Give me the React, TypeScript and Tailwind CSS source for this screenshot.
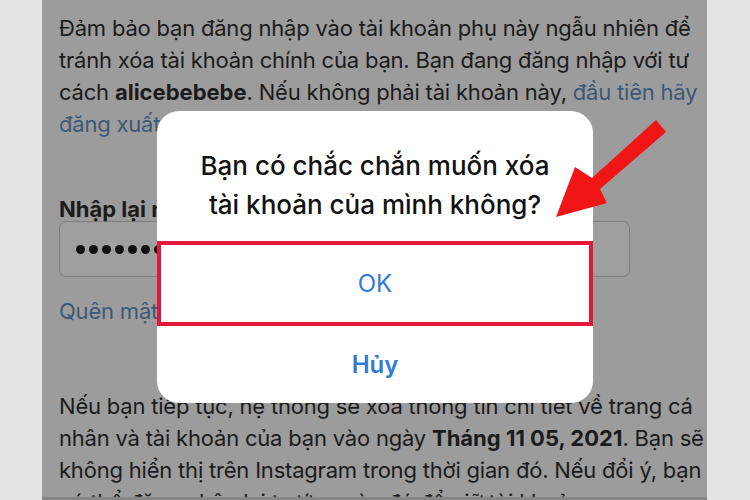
const font = { fontFamily: '"Inter", "Noto Sans", sans-serif' };

const Arrow = () => (
  <svg
    className="absolute left-[500px] top-[110px] w-[130px] h-[115px]"
    viewBox="542 110 130 115"
  >
    <polygon
      points="656,120 666,132 600,189 607,203 556,217 575,167 592,178"
      fill="#f11515"
    />
  </svg>
);

const ConfirmDialog = () => (
  <div className="absolute left-[115px] top-[111px] w-[436px] h-[292px] rounded-[22px] bg-white flex flex-col overflow-hidden">
    <div className="h-[130px] pt-[35px] text-center text-[26px] leading-[39px] font-medium text-[#111]">
      <div>Bạn có chắc chắn muốn xóa</div>
      <div>tài khoản của mình không?</div>
    </div>
    <div className="h-[85px] border-[4px] border-[#e3173a] flex items-center justify-center text-[24px] text-[#2f7bd5]">
      OK
    </div>
    <div className="flex-1 flex items-center justify-center text-[24px] font-semibold text-[#2f7bd5]">
      Hủy
    </div>
  </div>
);

export default function App() {
  return (
    <div className="w-[750px] h-[500px] flex bg-[#e4e4e4] overflow-hidden" style={font}>
      <div className="w-[42px] shrink-0" />
      <div className="relative w-[665px] shrink-0 bg-[#9c9c9c] overflow-hidden border-b-[3px] border-[#858585]">
        <div className="pl-[17px] pt-[12px] text-[22px] leading-[32px] tracking-[-0.2px] text-[#1b1b1b] whitespace-nowrap">
          <div>Đảm bảo bạn đăng nhập vào tài khoản phụ này ngẫu nhiên để</div>
          <div>tránh xóa tài khoản chính của bạn. Bạn đang đăng nhập với tư</div>
          <div>
            cách <b className="tracking-normal">alicebebebe</b>. Nếu không phải tài khoản này,{" "}
            <span className="text-[#3c5878]">đầu tiên hãy</span>
          </div>
          <div className="text-[#3c5878]">đăng xuất rồi đăng nhập lại.</div>

          <div className="mt-[53px] font-bold tracking-normal">Nhập lại mật khẩu</div>
          <div className="mt-[-4px] w-[571px] h-[56px] rounded-[7px] border border-[#7e7e7e] bg-[#9f9f9f] flex items-center gap-[4px] pl-[16px]">
            {Array.from({ length: 10 }).map((_, i) => (
              <span key={i} className="w-[9px] h-[9px] rounded-full bg-[#111]" />
            ))}
          </div>
          <div className="mt-[18px] text-[#3c5878]">Quên mật khẩu?</div>

          <div className="mt-[63px]">
            Nếu bạn tiếp tục, hệ thống sẽ xóa thông tin chi tiết về trang cá
          </div>
          <div>
            nhân và tài khoản của bạn vào ngày <b className="tracking-normal">Tháng 11 05, 2021</b>. Bạn sẽ
          </div>
          <div>không hiển thị trên Instagram trong thời gian đó. Nếu đổi ý, bạn</div>
          <div>có thể đăng nhập lại trước ngày đó để giữ tài khoản.</div>
        </div>
        <ConfirmDialog />
        <Arrow />
      </div>
    </div>
  );
}
